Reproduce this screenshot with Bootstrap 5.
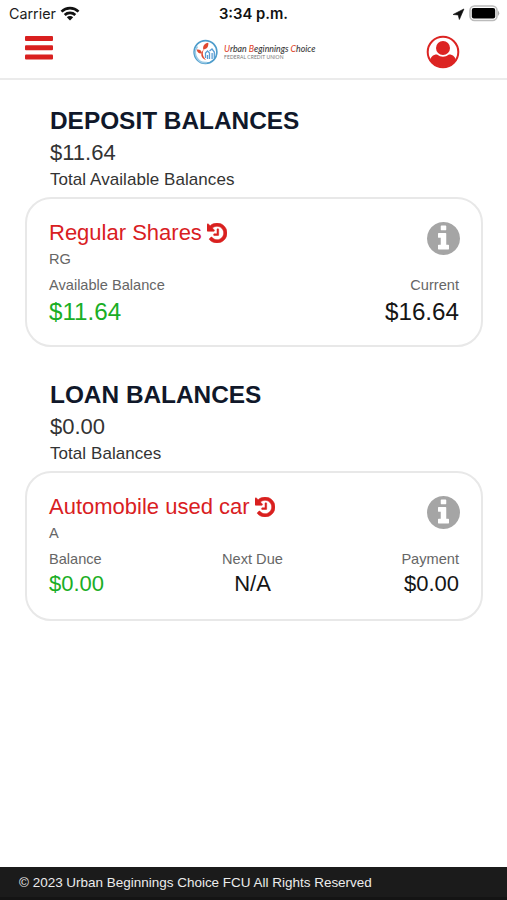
<!DOCTYPE html>
<html lang="en">
<head>
<meta charset="utf-8">
<meta name="viewport" content="width=device-width, initial-scale=1">
<title>Account balances</title>
<link href="https://cdn.jsdelivr.net/npm/bootstrap@5.3.0/dist/css/bootstrap.min.css" rel="stylesheet">
<style>
body { font-family: "Liberation Sans", Arial, sans-serif; color: #333; background: #fff; overflow: hidden; }
svg { display: block; flex-shrink: 0; }
.status { height: 28px; padding: 0 7px 0 9px; font: 500 14px/28px Inter, sans-serif; color: #1c1c1c; }
.status > * { flex: 1 1 0; }
.carrier { font-weight: 400; font-size: 14.3px; }
.clock { font-weight: 600; font-size: 14.8px; color: #111; position: relative; left: -1px; }
.wifi { margin: -2px 0 0 4px; }
.battery { margin-top: -2px; }
.topbar { height: 52px; padding: 0 47px 3px 25px; border-bottom: 2px solid #ebebeb; }
.side { width: 34px; }
.brand { padding-left: 23px; }
.wordmark { width: 91px; margin-left: 5px; font-family: Lato, sans-serif; white-space: nowrap; }
.bank-name { width: max-content; font-size: 10.4px; line-height: 11px; font-style: italic; font-weight: 500; color: #383838; transform: scaleX(.845); transform-origin: 0 50%; }
.bank-name span { color: #df4930; }
.bank-type { font-size: 5px; line-height: 6px; letter-spacing: .08px; color: #777; }
.balances { height: 274px; padding: 25px 24px 0 25px; }
.totals { padding-left: 25px; }
.totals h2 { font-size: 24.4px; line-height: 32px; font-weight: 700; color: #10182a; margin: 0; }
.total-amount { font-size: 22px; line-height: 32px; }
.total-label { font-size: 17px; line-height: 22px; letter-spacing: .06px; }
.account { height: 150px; margin-top: 6px; border: 2px solid #e8e8e8; border-radius: 26px; padding: 20px 22px 0 22px; }
.account-name { font-size: 22px; line-height: 28px; color: #d9201f; gap: 5px; }
.code, .field { font-size: 14.6px; line-height: 20px; color: #666; }
.code { margin-top: 2px; }
.field { margin-top: 6px; }
.amount { line-height: 30px; color: #151515; font-size: 22px; margin-top: 0; }
.amount-lg { font-size: 24.2px; margin-top: 2px; }
.amount.good { color: #1aae25; }
.next-due { position: relative; left: -1.500px; }
.info { margin: 3px -1px 0 0; color: #a5a5a5; }
.foot { height: 33px; background: #1b1b1b; color: #ececec; padding-left: 19px; font-size: 13.48px; line-height: 31px; border-bottom: 3px solid #141414; }
</style>
<script src="https://cdn.jsdelivr.net/npm/bootstrap@5.3.0/dist/js/bootstrap.bundle.min.js"></script>
</head>
<body class="d-flex flex-column vh-100">
<svg width="0" height="0" class="d-none" aria-hidden="true">
  <symbol id="history" viewBox="0 128 1536 1536"><path fill="currentColor" d="M1536 896q0 156-61 298t-164 245-245 164-298 61q-172 0-327-72.500t-264-204.500q-7-10-6.500-22.500t8.500-20.500l137-138q10-9 25-9 16 2 23 12 73 95 179 147t225 52q104 0 198.500-40.500t163.500-109.500 109.500-163.500 40.500-198.500-40.500-198.500-109.500-163.500-163.500-109.500-198.500-40.500q-98 0-188 35.500t-160 101.500l137 138q31 30 14 69-17 40-59 40h-448q-26 0-45-19t-19-45v-448q0-42 40-59 39-17 69 14l130 129q107-101 244.500-156.500t284.500-55.500q156 0 298 61t245 164 164 245 61 298zm-640-288v448q0 14-9 23t-23 9h-320q-14 0-23-9t-9-23v-64q0-14 9-23t23-9h224v-352q0-14 9-23t23-9h64q14 0 23 9t9 23z" stroke="currentColor" stroke-width="40"/></symbol>
  <symbol id="info" viewBox="0 128 1536 1536"><path fill="currentColor" d="M1024 1376v-160q0-14-9-23t-23-9h-96v-512q0-14-9-23t-23-9h-320q-14 0-23 9t-9 23v160q0 14 9 23t23 9h96v320h-96q-14 0-23 9t-9 23v160q0 14 9 23t23 9h448q14 0 23-9t9-23zm-128-896v-160q0-14-9-23t-23-9h-192q-14 0-23 9t-9 23v160q0 14 9 23t23 9h192q14 0 23-9t9-23zm640 416q0 209-103 385.500t-279.500 279.500-385.500 103-385.500-103-279.500-279.500-103-385.500 103-385.500 279.500-279.500 385.500-103 385.500 103 279.500 279.500 103 385.500z"/></symbol>
</svg>

<div class="status d-flex align-items-center flex-shrink-0">
  <div class="carrier d-flex align-items-center">Carrier
    <svg class="wifi" width="20" height="15" viewBox="0 0 20 15" fill="none" stroke="#111" stroke-width="2.700"><path d="M1.500 5.600a12.200 12.200 0 0 1 17 0M4.700 9a7.700 7.700 0 0 1 10.600 0"/><path fill="#111" stroke="none" d="M10 14.500 6.800 11.200a4.600 4.600 0 0 1 6.400 0z"/></svg>
  </div>
  <div class="clock text-center">3:34 p.m.</div>
  <div class="d-flex justify-content-end align-items-center gap-1">
    <svg width="13" height="13" viewBox="0 0 12 12"><path fill="#111" stroke="#111" stroke-width=".6" stroke-linejoin="round" d="M11 .9 6.800 10.600 5.700 6.400 1 6z"/></svg>
    <svg class="battery" width="31" height="17" viewBox="0 0 31 17"><rect x="1" y="1" width="27" height="14.500" rx="4.500" fill="#fff" stroke="#bbb" stroke-width="1.600"/><rect x="2.800" y="3" width="23.400" height="10.500" rx="2" fill="#000"/><path d="M29 5.500q2.500 2.800 0 5.500z" fill="#aaa"/></svg>
  </div>
</div>

<nav class="topbar d-flex align-items-center justify-content-between flex-shrink-0">
  <div class="side pb-2"><svg width="28" height="24" viewBox="0 0 28 24" fill="#d9201f"><rect y="0" width="28" height="5" rx="1"/><rect y="9.300" width="28" height="5" rx="1"/><rect y="18.600" width="28" height="5" rx="1"/></svg></div>
  <div class="brand d-flex align-items-center">
    <svg width="26" height="28" viewBox="1 0 26 28">
      <circle cx="13.500" cy="14" r="11.400" fill="#fff" stroke="#4d9ccb" stroke-width="1.600"/>
      <path d="M5.500 8.500A10 10 0 0 0 15 24.500" fill="none" stroke="#9bcbe6" stroke-width="1.600"/>
      <g fill="#df4930"><path d="M11.300 11.500c-.8-3.500 1.200-6 5-6.700.4 3.800-1.200 6.300-5 6.700zM10 15.500c-3.200.3-4.800-1-5.300-4 3-.5 5 .8 5.300 4z"/><path d="M12 11c-2 4-1.500 7 2 11-5-2-6.500-6-2-11z"/></g>
      <path d="M13.500 20v-5l2-2 2 2v6m0-8 2.500-2 2.300 3v6M15.500 21v-4m4.600 4v-6" fill="none" stroke="#5b9ed4" stroke-width="1.300"/>
    </svg>
    <div class="wordmark">
      <div class="bank-name"><span>U</span>rban <span>B</span>eginnings <span>C</span>hoice</div>
      <div class="bank-type">FEDERAL CREDIT UNION</div>
    </div>
  </div>
  <div class="side">
    <svg width="34" height="34" viewBox="0 0 34 34"><defs><clipPath id="disc"><circle cx="17" cy="17" r="15"/></clipPath></defs><circle cx="17" cy="17" r="15.300" fill="#fff" stroke="#dc2422" stroke-width="2"/><g fill="#dc2422" clip-path="url(#disc)"><circle cx="17" cy="13" r="7"/><path d="M4 32v-5c0-5 3-7.500 7-7.500q6 4.500 12 0c4 0 7 2.500 7 7.500v5z"/></g></svg>
  </div>
</nav>

<main class="flex-grow-1">
  <section class="balances">
    <div class="totals"><h2>DEPOSIT BALANCES</h2><div class="total-amount">$11.64</div><div class="total-label">Total Available Balances</div></div>
    <div class="account">
      <div class="d-flex justify-content-between">
        <div><div class="account-name d-flex align-items-center">Regular Shares <svg width="20" height="20"><use href="#history"/></svg></div><div class="code">RG</div></div>
        <svg class="info" width="33" height="33"><use href="#info"/></svg>
      </div>
      <div class="d-flex justify-content-between">
        <div><div class="field">Available Balance</div><div class="amount amount-lg good">$11.64</div></div>
        <div class="text-end"><div class="field">Current</div><div class="amount amount-lg">$16.64</div></div>
      </div>
    </div>
  </section>
  <section class="balances">
    <div class="totals"><h2>LOAN BALANCES</h2><div class="total-amount">$0.00</div><div class="total-label">Total Balances</div></div>
    <div class="account">
      <div class="d-flex justify-content-between">
        <div><div class="account-name d-flex align-items-center">Automobile used car <svg width="20" height="20"><use href="#history"/></svg></div><div class="code">A</div></div>
        <svg class="info" width="33" height="33"><use href="#info"/></svg>
      </div>
      <div class="row gx-0">
        <div class="col-4"><div class="field">Balance</div><div class="amount good">$0.00</div></div>
        <div class="col-4 text-center next-due"><div class="field">Next Due</div><div class="amount">N/A</div></div>
        <div class="col-4 text-end"><div class="field">Payment</div><div class="amount">$0.00</div></div>
      </div>
    </div>
  </section>
</main>
<footer class="foot flex-shrink-0">© 2023 Urban Beginnings Choice FCU All Rights Reserved</footer>
</body>
</html>
